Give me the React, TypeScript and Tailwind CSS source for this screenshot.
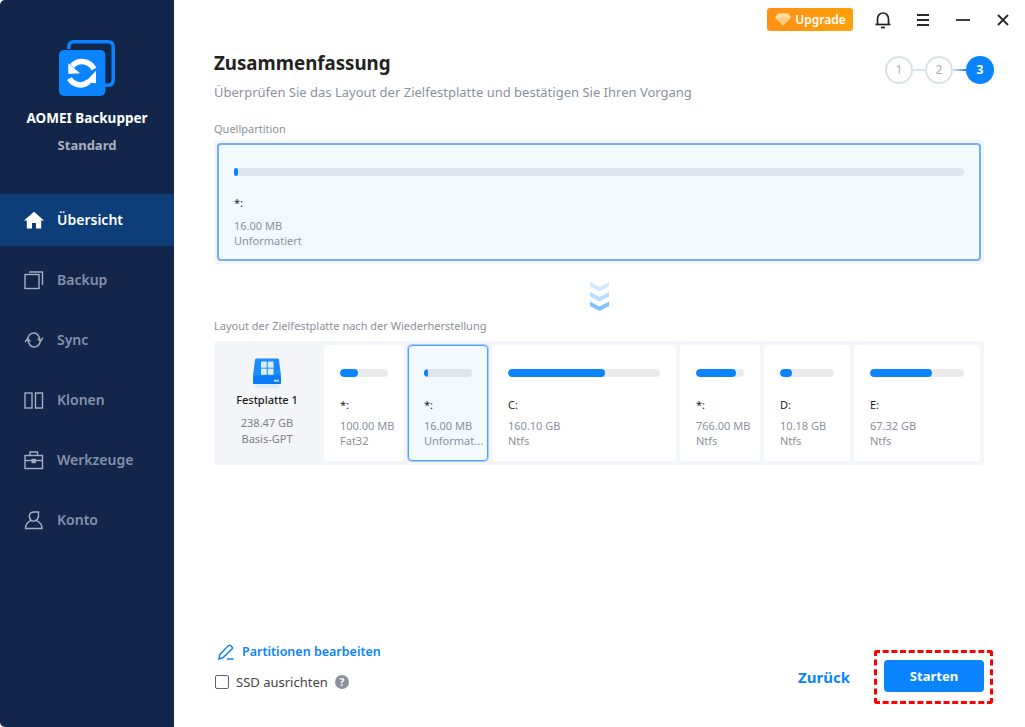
import React from "react";

const font = { fontFamily: '"Noto Sans", sans-serif' };

function Logo() {
  return (
    <svg width="58" height="58" viewBox="0 0 58 58" className="block">
      <path d="M9.8 10 V8 Q9.8 2.8 15 2.8 H49 Q54.2 2.8 54.2 8 V41 Q54.2 46.2 49 46.2 H46" fill="none" stroke="#0a84ff" strokeWidth="3.5" />
      <rect x="0" y="11" width="46.4" height="46" rx="5" fill="#0a84ff" />
      <path d="M35 30 C31 22 20 19.5 13 27" fill="none" stroke="#fff" strokeWidth="5.5" />
      <path d="M9.3 24.3 L21 34.3 L9.3 35 Z" fill="#fff" />
      <path d="M10.5 39.5 C15 47 25 48 30 42" fill="none" stroke="#fff" strokeWidth="5.5" />
      <path d="M37 31.7 V44.3 L26 43.3 Z" fill="#fff" />
    </svg>
  );
}

function NavIcon({ name, color }: { name: string; color: string }) {
  const p = { fill: "none", stroke: color, strokeWidth: 1.4 };
  return (
    <svg width="20" height="20" viewBox="0 0 20 20" className="shrink-0">
      {name === "home" && (
        <path d="M10 1.8 L20 10.5 H17.2 V18.5 H12 V13 H8 V18.5 H2.8 V10.5 H0 Z" fill="#fff" />
      )}
      {name === "backup" && (
        <g {...p}>
          <rect x="1" y="4.5" width="14" height="14" />
          <path d="M5 2 H18.5 V15" />
        </g>
      )}
      {name === "sync" && (
        <g {...p}>
          <path d="M3.5 9 C4.5 5 7 3 10 3 C13 3 15 5 16.3 10.5" />
          <path d="M16.5 11 C15.5 15 13 17 10 17 C7 17 5 15.5 3.7 9.5" />
          <path d="M19 7.5 L16.5 11.5 L13.5 8.5" />
          <path d="M1 12 L3.5 8.5 L6.5 11.5" />
        </g>
      )}
      {name === "clone" && (
        <g {...p}>
          <rect x="1" y="3" width="7" height="15" />
          <path d="M11.5 3 H18.5 V18 H11.5 Z" />
        </g>
      )}
      {name === "tools" && (
        <g {...p}>
          <rect x="1" y="5.5" width="17.5" height="13" />
          <path d="M6 5.5 V2 H13.5 V5.5" />
          <path d="M1 10.5 H18.5" />
          <rect x="8.2" y="9.5" width="3" height="3" fill={color} />
        </g>
      )}
      {name === "user" && (
        <g {...p}>
          <path d="M7 10 C4 7 5 2 10 2 H14.5 V6 C14.5 8 13.5 9.5 12 10.3" />
          <path d="M7 10.3 C8.5 11.3 10.5 11.3 12 10.3 C15 11.5 18 13 18 18.5 H1.5 C1.5 13 4 11.5 7 10.3 Z" />
        </g>
      )}
    </svg>
  );
}

function Nav({ icon, label, active }: { icon: string; label: string; active?: boolean }) {
  return (
    <div className={`flex h-[52px] items-center gap-[13px] pl-[24px] mb-2 ${active ? "bg-[#0d3e7a]" : ""}`}>
      <NavIcon name={icon} color="#a3aec0" />
      <span className={`pb-[2px] text-[14px] font-semibold ${active ? "text-white" : "text-[#8391a9]"}`}>{label}</span>
    </div>
  );
}

function Partition({ w, fill, name, size, fs, selected, barW }: { w: string; fill: number; barW: number; name: string; size: string; fs: string; selected?: boolean }) {
  return (
    <div className={`${w} h-[116px] shrink-0 rounded-[4px] pt-[24px] ${selected ? "bg-[#f2f9ff] border border-[#4d9ef8] shadow-[0_0_0_1px_#a8d2ff] pl-[15px] !pt-[23px]" : "bg-white pl-[16px]"}`}>
      <div className={`h-[8px] rounded-full overflow-hidden ${selected ? "bg-[#e0e4ec]" : "bg-[#ebebeb]"}`} style={{ width: barW }}>
        <div className="h-full rounded-full bg-[#0a84ff]" style={{ width: fill }} />
      </div>
      <div className="mt-[19px] text-[11px] leading-[18px] text-[#1c1c1c]">{name}</div>
      <div className="mt-[4px] text-[11px] leading-[15px] text-[#8b919c] whitespace-nowrap">{size}</div>
      <div className="text-[11px] leading-[15px] text-[#8b919c] whitespace-nowrap">{fs}</div>
    </div>
  );
}

export default function App() {
  return (
    <div className="w-[1025px] h-[727px] flex overflow-hidden bg-white rounded-[5px]" style={font}>
      <aside className="w-[174px] shrink-0 bg-[#12264a] flex flex-col">
        <div className="pl-[59px] pt-[39px]"><Logo /></div>
        <div className="mt-[11px] text-center text-[13.5px] font-bold leading-[20px] text-white">AOMEI Backupper</div>
        <div className="mt-[7px] text-center text-[13px] font-bold leading-[20px] text-[#a9afbd]">Standard</div>
        <div className="mt-[39px]">
          <Nav icon="home" label="Übersicht" active />
          <Nav icon="backup" label="Backup" />
          <Nav icon="sync" label="Sync" />
          <Nav icon="clone" label="Klonen" />
          <Nav icon="tools" label="Werkzeuge" />
          <Nav icon="user" label="Konto" />
        </div>
      </aside>

      <main className="flex-1 flex flex-col pl-[40px] pr-[41px]">
        <div className="h-[39px] pt-[8px] flex items-start justify-end -mr-[26px]">
          <div className="h-[23px] w-[86px] rounded-[3px] bg-gradient-to-r from-[#ff9115] to-[#ffa008] flex items-center justify-center gap-[3px] text-[12px] font-semibold text-white">
            <svg width="18" height="13" viewBox="0 0 17 13">
              <path d="M3.5 0.5 H13.5 L16.5 4.5 L8.5 12.5 L0.5 4.5 Z" fill="#ffe0a8" />
              <path d="M0.5 4.5 H16.5 L8.5 12.5 Z" fill="#ffcf80" />
            </svg>
            Upgrade
          </div>
          <svg width="16" height="18" viewBox="0 0 16 18" className="ml-[22px] mt-[3px]" fill="none" stroke="#222" strokeWidth="1.7">
            <path d="M2.5 13 V8 C2.5 4.5 5 2 8 2 C11 2 13.5 4.5 13.5 8 V13" />
            <path d="M0.5 13.5 H15.5" />
            <path d="M6 16.5 H10" />
          </svg>
          <svg width="14" height="14" viewBox="0 0 14 14" className="ml-[25px] mt-[5px]" stroke="#2a2a2a" strokeWidth="1.8">
            <path d="M1 2 H13 M1 7 H13 M1 12 H13" />
          </svg>
          <svg width="14" height="14" viewBox="0 0 14 14" className="ml-[26px] mt-[5px]" stroke="#2a2a2a" strokeWidth="1.8">
            <path d="M0 7 H14" />
          </svg>
          <svg width="14" height="14" viewBox="0 0 14 14" className="ml-[26px] mt-[5px]" stroke="#2a2a2a" strokeWidth="1.9">
            <path d="M2 2 L12 12 M12 2 L2 12" />
          </svg>
        </div>

        <div className="flex justify-between pt-[11px]">
          <div>
            <h1 className="text-[18.7px] leading-[26px] font-bold text-[#222]">Zusammenfassung</h1>
            <p className="mt-[7px] text-[13px] leading-[18px] text-[#8b919c]">Überprüfen Sie das Layout der Zielfestplatte und bestätigen Sie Ihren Vorgang</p>
          </div>
          <div className="flex items-center h-[28px] mt-[6px] mr-[-10px]">
            <div className="w-[28px] h-[28px] rounded-full border-2 border-[#dbe3ea] flex items-center justify-center text-[12px] text-[#a9b1bd]">1</div>
            <div className="w-[12px] h-[2px] bg-[#dbe3ea]" />
            <div className="w-[28px] h-[28px] rounded-full border-2 border-[#dbe3ea] flex items-center justify-center text-[12px] text-[#a9b1bd]">2</div>
            <div className="w-[13px] h-[2px] bg-gradient-to-r from-[#cfe2f5] to-[#0a84ff]" />
            <div className="w-[28px] h-[28px] rounded-full bg-[#0a84ff] flex items-center justify-center text-[12px] font-bold text-white">3</div>
          </div>
        </div>

        <div className="mt-[20px] text-[11px] leading-[16px] text-[#8b919c]">Quellpartition</div>
        <div className="mt-[3px] rounded-[4px] bg-[#f3f5f8] p-[3px] h-[124px]">
          <div className="h-[118px] rounded-[4px] border-2 border-[#74aef8] bg-[#f2f9ff] px-[15px] pt-[23px]">
            <div className="h-[8px] rounded-full bg-[#e0e4ec]">
              <div className="h-full w-[4px] rounded-full bg-[#0a84ff]" />
            </div>
            <div className="mt-[18px] text-[11px] leading-[18px] text-[#1c1c1c]">*:</div>
            <div className="mt-[6px] text-[11px] leading-[15px] text-[#8b919c]">16.00 MB</div>
            <div className="text-[11px] leading-[15px] text-[#8b919c]">Unformatiert</div>
          </div>
        </div>

        <div className="mt-[18px] flex justify-center">
          <svg width="19" height="29" viewBox="0 0 19 29">
            <path d="M0 0 L9.5 5 L19 0 V4.5 L9.5 9.5 L0 4.5 Z" fill="#d3e9ff" />
            <path d="M0 10 L9.5 15 L19 10 V14.5 L9.5 19.5 L0 14.5 Z" fill="#b4dcff" />
            <path d="M0 19.5 L9.5 24.5 L19 19.5 V24 L9.5 29 L0 24 Z" fill="#80c4ff" />
          </svg>
        </div>

        <div className="mt-[7px] text-[11px] leading-[16px] text-[#8b919c]">Layout der Zielfestplatte nach der Wiederherstellung</div>
        <div className="mt-[7px] flex gap-[4px] rounded-[4px] bg-[#f3f5f8] py-[4px] pr-[4px] h-[124px]">
          <div className="w-[106px] shrink-0 flex flex-col items-center pt-[13px]">
            <svg width="32" height="32" viewBox="0 0 32 32">
              <rect x="4" y="26" width="24" height="4" fill="#cfe6ff" opacity="0.6" />
              <path d="M4 2 Q4 0.5 5.5 0.5 H26.5 Q28 0.5 28 2 L30 18 H2 Z" fill="#1b8cff" />
              <rect x="2" y="17.5" width="28" height="8.5" rx="1" fill="#0a7cf5" />
              <rect x="10" y="3.5" width="5.7" height="6.2" fill="#dcefff" />
              <rect x="16.8" y="3.5" width="5.7" height="6.2" fill="#dcefff" />
              <rect x="10" y="10.6" width="5.7" height="6.2" fill="#dcefff" />
              <rect x="16.8" y="10.6" width="5.7" height="6.2" fill="#dcefff" />
              <rect x="23" y="21.8" width="5" height="1.8" fill="#bfe0ff" />
            </svg>
            <div className="mt-[1px] text-[11px] leading-[18px] font-medium text-[#1c1c1c]">Festplatte 1</div>
            <div className="mt-[6px] text-[11px] leading-[16px] text-[#7b818c]">238.47 GB</div>
            <div className="text-[11px] leading-[16px] text-[#7b818c]">Basis-GPT</div>
          </div>
          <Partition w="w-[80px]" barW={48} fill={18} name="*:" size="100.00 MB" fs="Fat32" />
          <Partition w="w-[80px]" barW={48} fill={4} name="*:" size="16.00 MB" fs="Unformat..." selected />
          <Partition w="w-[184px]" barW={152} fill={97} name="C:" size="160.10 GB" fs="Ntfs" />
          <Partition w="w-[80px]" barW={48} fill={40} name="*:" size="766.00 MB" fs="Ntfs" />
          <Partition w="w-[86px]" barW={54} fill={12} name="D:" size="10.18 GB" fs="Ntfs" />
          <Partition w="w-[126px]" barW={94} fill={62} name="E:" size="67.32 GB" fs="Ntfs" />
        </div>

        <div className="mt-auto mb-[23px] flex items-end justify-between">
          <div className="mb-[12px]">
            <div className="flex items-center gap-[8px] pl-[4px] text-[12.5px] font-semibold text-[#0a84ff]">
              <svg width="16" height="16" viewBox="0 0 16 16" fill="none" stroke="#0a84ff" strokeWidth="1.5">
                <path d="M1 15 L1.8 10.5 L10.5 1.5 Q11.5 0.8 12.5 1.5 L14 3 Q14.7 4 14 5 L5.2 13.5 Z" />
                <path d="M9 15 H15.5" />
              </svg>
              Partitionen bearbeiten
            </div>
            <div className="mt-[11px] flex items-center text-[13px] text-[#444]">
              <span className="ml-[1px] w-[14px] h-[14px] rounded-[2px] border-[1.5px] border-[#5c6270] bg-white" />
              <span className="ml-[7px]">SSD ausrichten</span>
              <span className="ml-[7px] w-[14px] h-[14px] rounded-full bg-[#8b919c] text-white text-[10px] font-bold flex items-center justify-center">?</span>
            </div>
          </div>
          <div className="flex items-center -mr-[9px]">
            <span className="mr-[24px] text-[15px] font-bold text-[#0a84ff]">Zurück</span>
            <div className="w-[119px] h-[54px] border-[3px] border-dashed border-[#ff0000] rounded-[3px] pl-[7px] pt-[7px]">
              <div className="w-[100px] h-[32px] pt-[2px] rounded-[4px] bg-[#0a84ff] flex items-center justify-center text-[13px] font-bold text-white">Starten</div>
            </div>
          </div>
        </div>
      </main>
    </div>
  );
}
